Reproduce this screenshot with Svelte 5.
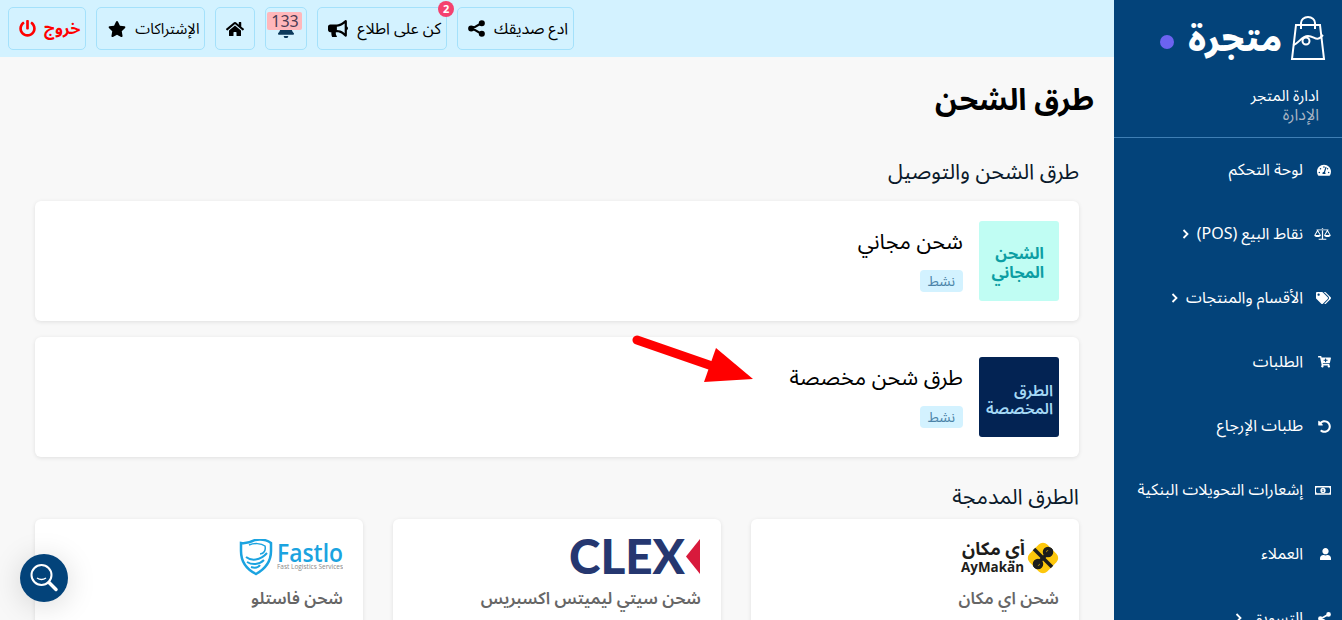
<script>
  const icons = {
    gauge: { box: '0 0 576 512', d: 'M288 32C128.94 32 0 160.94 0 320c0 52.8 14.25 102.26 39.06 144.8 5.61 9.62 16.3 15.2 27.44 15.2h443c11.14 0 21.83-5.58 27.44-15.2C561.75 422.26 576 372.8 576 320c0-159.06-128.94-288-288-288zm0 64c14.71 0 26.58 10.13 30.32 23.65-1.11 2.26-2.64 4.23-3.45 6.67l-9.22 27.67c-5.13 3.49-10.97 6.01-17.64 6.01-17.67 0-32-14.33-32-32S270.33 96 288 96zM96 384c-17.67 0-32-14.33-32-32s14.33-32 32-32 32 14.33 32 32-14.33 32-32 32zm48-160c-17.67 0-32-14.33-32-32s14.33-32 32-32 32 14.33 32 32-14.33 32-32 32zm246.77-72.41l-61.33 184C343.13 347.33 352 364.54 352 384c0 11.72-3.38 22.55-8.88 32H232.88c-5.5-9.45-8.88-20.28-8.88-32 0-33.94 26.5-61.43 59.9-63.59l61.34-184.01c4.17-12.56 17.73-19.45 30.36-15.17 12.57 4.19 19.35 17.79 15.17 30.36zm14.66 57.2l15.52-46.55c3.47-1.29 7.13-2.23 11.05-2.23 17.67 0 32 14.33 32 32s-14.33 32-32 32c-11.38-.01-20.89-6.28-26.57-15.22zM480 384c-17.67 0-32-14.33-32-32s14.33-32 32-32 32 14.33 32 32-14.33 32-32 32z' },
    scale: { box: '0 0 640 512', d: 'M296 50h48v392h120v40H176v-40h120zM96 90h448v36H96zM118 126h34L260 310c0 42-55 66-125 66S10 352 10 310zM135 172L56 306h158zM488 126h34L630 310c0 42-55 66-125 66s-125-24-125-66zM505 172L426 306h158z', rule: 'evenodd' },
    tags: { box: '0 0 640 512', d: 'M497.941 225.941L286.059 14.059A48 48 0 0 0 252.118 0H48C21.49 0 0 21.49 0 48v204.118a48 48 0 0 0 14.059 33.941l211.882 211.882c18.744 18.745 49.136 18.746 67.882 0l204.118-204.118c18.745-18.745 18.745-49.137 0-67.882zM112 160c-26.51 0-48-21.49-48-48s21.49-48 48-48 48 21.49 48 48-21.49 48-48 48zm513.941 133.823L421.823 497.941c-18.745 18.745-49.137 18.745-67.882 0l-.36-.36L527.64 323.522c16.999-16.999 26.36-39.6 26.36-63.64s-9.362-46.641-26.36-63.64L331.397 0h48.721a48 48 0 0 1 33.941 14.059l211.882 211.882c18.745 18.745 18.745 49.137 0 67.882z' },
    cart: { box: '0 0 576 512', d: 'M504.717 320H211.572l6.545 32h268.418c15.401 0 26.816 14.301 23.403 29.319l-5.517 24.276C523.112 414.668 536 433.828 536 456c0 31.202-25.519 56.444-56.824 55.994-29.823-.429-54.35-24.631-55.155-54.447-.44-16.287 6.085-31.049 16.803-41.548H231.176C241.553 426.165 248 440.326 248 456c0 31.813-26.528 57.431-58.67 55.938-28.54-1.325-51.751-24.385-53.251-52.917-1.158-22.034 10.436-41.455 28.051-51.586L93.883 64H24C10.745 64 0 53.255 0 40V24C0 10.745 10.745 0 24 0h102.529c11.401 0 21.228 8.021 23.513 19.19L159.208 64H551.99c15.401 0 26.816 14.301 23.403 29.319l-47.273 208C525.637 312.246 515.923 320 504.717 320zM408 168h-48v-40c0-8.837-7.163-16-16-16h-16c-8.837 0-16 7.163-16 16v40h-48c-8.837 0-16 7.163-16 16v16c0 8.837 7.163 16 16 16h48v40c0 8.837 7.163 16 16 16h16c8.837 0 16-7.163 16-16v-40h48c8.837 0 16-7.163 16-16v-16c0-8.837-7.163-16-16-16z' },
    undo: { box: '0 0 512 512', d: 'M255.545 8c-66.269.119-126.438 26.233-170.86 68.685L48.971 40.971C33.851 25.851 8 36.559 8 57.941V192c0 13.255 10.745 24 24 24h134.059c21.382 0 32.09-25.851 16.971-40.971l-41.75-41.75c30.864-28.899 70.801-44.907 113.23-45.273 92.398-.798 170.283 73.977 169.484 169.442C423.236 348.009 349.816 424 256 424c-41.127 0-79.997-14.678-110.63-41.556-4.743-4.161-11.906-3.908-16.368.553L89.34 422.659c-4.872 4.872-4.631 12.815.482 17.433C133.798 479.813 192.074 504 256 504c136.966 0 247.999-111.033 248-247.998C504.001 119.193 392.354 7.755 255.545 8z' },
    money: { box: '0 0 640 512', d: 'M0 80h640v352H0zM60 140c0 30-10 40-20 40v152c20 0 30 20 30 40h500c0-20 10-40 30-40V180c-20 0-30-20-30-40zM320 150a106 106 0 1 1 0 212 106 106 0 0 1 0-212zM296 200v30h14v60h-18v30h60v-30h-16v-90z', rule: 'evenodd' },
    user: { box: '0 0 448 512', d: 'M224 256c70.7 0 128-57.3 128-128S294.7 0 224 0 96 57.3 96 128s57.3 128 128 128zm89.6 32h-16.7c-22.2 10.2-46.9 16-72.9 16s-50.6-5.8-72.9-16h-16.7C60.2 288 0 348.2 0 422.4V464c0 26.5 21.5 48 48 48h352c26.5 0 48-21.5 48-48v-41.6c0-74.2-60.2-134.4-134.4-134.4z' },
    share: { box: '0 0 512 512', d: 'M416 4a92 92 0 1 1 0 184 92 92 0 0 1 0-184zM416 324a92 92 0 1 1 0 184 92 92 0 0 1 0-184zM96 164a92 92 0 1 1 0 184 92 92 0 0 1 0-184zM384 70l32 56L128 296l-32-56zM416 386l-32 56L96 272l32-56z' },
    bullhorn: { box: '0 0 576 512', d: 'M576 240c0-23.63-12.95-44.04-32-55.12V32.01C544 23.26 537.02 0 512 0c-7.12 0-14.19 2.38-19.98 7.02l-85.03 68.03C364.28 109.19 310.66 128 256 128H64c-35.35 0-64 28.65-64 64v96c0 35.35 28.65 64 64 64h33.7c-1.39 10.48-2.18 21.14-2.18 32 0 39.77 9.26 77.35 25.56 110.94 5.19 10.69 16.52 17.06 28.4 17.06h74.28c26.05 0 41.69-29.84 25.9-50.56-16.4-21.52-26.15-48.36-26.15-77.44 0-11.11 1.62-21.79 4.41-32H256c54.66 0 108.28 18.81 150.98 52.95l85.03 68.03a32.023 32.023 0 0 0 19.98 7.02c24.92 0 32-22.78 32-32V295.13C563.05 284.04 576 263.63 576 240zm-96 141.42l-33.05-26.44C392.95 311.78 325.12 288 256 288v-96c69.12 0 136.95-23.78 190.95-66.98L480 98.58v282.84z' },
    bell: { box: '0 0 448 512', d: 'M224 512c35.32 0 63.97-28.65 63.97-64H160.03c0 35.35 28.65 64 63.97 64zm215.39-149.71c-19.32-20.76-55.47-51.99-55.47-154.29 0-77.7-54.48-139.9-127.94-155.16V32c0-17.67-14.32-32-31.98-32s-31.98 14.33-31.98 32v20.84C118.56 68.1 64.08 130.3 64.08 208c0 102.3-36.15 133.53-55.47 154.29-6 6.45-8.66 14.16-8.61 21.71.11 16.4 12.98 32 32.1 32h383.8c19.12 0 32-15.6 32.1-32 .05-7.55-2.61-15.27-8.61-21.71z' },
    home: { box: '0 0 576 512', d: 'M280.37 148.26L96 300.11V464a16 16 0 0 0 16 16l112.06-.29a16 16 0 0 0 15.92-16V368a16 16 0 0 1 16-16h64a16 16 0 0 1 16 16v95.64a16 16 0 0 0 16 16.05L464 480a16 16 0 0 0 16-16V300L295.67 148.26a12.19 12.19 0 0 0-15.3 0zM571.6 251.47L488 182.56V44.05a12 12 0 0 0-12-12h-56a12 12 0 0 0-12 12v72.61L318.47 43a48 48 0 0 0-61 0L4.34 251.47a12 12 0 0 0-1.6 16.9l25.5 31A12 12 0 0 0 45.15 301l235.22-193.74a12.19 12.19 0 0 1 15.3 0L530.9 301a12 12 0 0 0 16.9-1.6l25.5-31a12 12 0 0 0-1.7-16.93z' },
    star: { box: '0 0 576 512', d: 'M259.3 17.8L194 150.2 47.9 171.5c-26.2 3.8-36.7 36.1-17.7 54.6l105.7 103-25 145.5c-4.5 26.3 23.2 46 46.4 33.7L288 439.6l130.7 68.7c23.2 12.2 50.9-7.4 46.4-33.7l-25-145.5 105.7-103c19-18.5 8.5-50.8-17.7-54.6L382 150.2 316.7 17.8c-11.7-23.6-45.6-23.9-57.4 0z' },
    power: { box: '0 0 512 512', d: 'M400 54.1c63 45 104 118.6 104 201.9 0 136.8-110.8 247.7-247.5 248C120 504.3 8.2 393 8 256.4 7.9 173.1 48.9 99.3 111.8 54.2c11.7-8.3 28-4.8 35 7.7L162.6 90c5.9 10.5 3.1 23.8-6.6 31-41.5 30.8-68 79.6-68 134.9-.1 92.3 74.5 168.1 168 168.1 91.6 0 168.6-74.2 168-169.1-.3-51.8-24.7-101.8-68.1-134-9.7-7.2-12.4-20.5-6.5-30.9l15.8-28.1c7-12.4 23.2-16.1 34.8-7.8zM296 264V24c0-13.3-10.7-24-24-24h-32c-13.3 0-24 10.7-24 24v240c0 13.3 10.7 24 24 24h32c13.3 0 24-10.7 24-24z' }
  };

  const menu = [
    { label: 'لوحة التحكم', icon: 'gauge', w: 14 },
    { label: 'نقاط البيع (POS)', icon: 'scale', w: 17, more: true },
    { label: 'الأقسام والمنتجات', icon: 'tags', w: 15, more: true },
    { label: 'الطلبات', icon: 'cart', w: 13 },
    { label: 'طلبات الإرجاع', icon: 'undo', w: 13 },
    { label: 'إشعارات التحويلات البنكية', icon: 'money', w: 16 },
    { label: 'العملاء', icon: 'user', w: 11 },
    { label: 'التسويق', icon: 'share', w: 13, more: true }
  ];

  const methods = [
    { name: 'شحن مجاني', thumb: ['الشحن', 'المجاني'], kind: 'free' },
    { name: 'طرق شحن مخصصة', thumb: ['الطرق', 'المخصصة'], kind: 'custom' }
  ];

  // icon height follows from the width and the viewBox
  function iconHeight(name, w) {
    const [, , bw, bh] = icons[name].box.split(' ').map(Number);
    return (w * bh) / bw;
  }
</script>

{#snippet icon(name, w)}
  <svg class="ico" width={w} height={iconHeight(name, w)} viewBox={icons[name].box} fill="currentColor">
    <path d={icons[name].d} fill-rule={icons[name].rule || 'nonzero'} />
  </svg>
{/snippet}

<div class="page" dir="rtl" lang="ar">
  <aside class="sidebar">
    <div class="brand">
      <svg width="36" height="45" viewBox="0 0 36 45" fill="none" stroke="#fff" stroke-width="2">
        <path d="M6 9h24l4 34H2z" />
        <path d="M11 13V7a7 6 0 0 1 14 0v6" />
        <path d="M3 29c6-1 8-9 15-9s8 7 15-1" />
        <circle cx="16" cy="25" r="3.500" />
      </svg>
      <span class="brand-name">متجرة</span>
      <span class="brand-dot"></span>
    </div>
    <div class="store">
      <div class="store-name">ادارة المتجر</div>
      <div class="store-role">الإدارة</div>
    </div>
    <nav>
      {#each menu as item}
        <div class="menu-item">
          <span class="menu-icon">{@render icon(item.icon, item.w)}</span>
          <span>{item.label}</span>
          {#if item.more}
            <svg class="chev" width="7" height="10" viewBox="0 0 7 10" fill="none" stroke="#fff" stroke-width="1.8"><path d="M1.500 1l4 4-4 4" /></svg>
          {/if}
        </div>
      {/each}
    </nav>
  </aside>

  <main>
    <header class="topbar">
      <div class="tool"><span>ادع صديقك</span>{@render icon('share', 17)}</div>
      <div class="tool notify">
        <span>كن على اطلاع</span>{@render icon('bullhorn', 20)}
        <b class="dot">2</b>
      </div>
      <div class="tool bell">
        <span class="bell-count">133</span>
        {@render icon('bell', 16)}
      </div>
      <div class="tool home">{@render icon('home', 18)}</div>
      <div class="tool subs"><span>الإشتراكات</span>{@render icon('star', 18)}</div>
      <div class="tool logout"><span>خروج</span>{@render icon('power', 17)}</div>
    </header>

    <h1>طرق الشحن</h1>

    <section class="content">
      <h2>طرق الشحن والتوصيل</h2>
      {#each methods as m}
        <div class="method">
          <div class="thumb {m.kind}"><span>{m.thumb[0]}</span><span>{m.thumb[1]}</span></div>
          <div class="method-body">
            <div class="method-name">{m.name}</div>
            <span class="status">نشط</span>
          </div>
        </div>
      {/each}

      <h2 class="second">الطرق المدمجة</h2>
      <div class="carriers">
        <div class="carrier">
          <svg class="logo" width="100" height="38" viewBox="0 0 100 38">
            <rect x="71.500" y="6.500" width="25" height="25" rx="6" transform="rotate(45 84 19)" fill="#fdc70c" />
            <g fill="none" stroke="#1d1d1b" stroke-width="3.500">
              <path d="M75 10l18 18" />
              <path d="M93 10L75 28" />
              <circle cx="89" cy="13" r="3.500" />
              <circle cx="79" cy="25" r="3.500" />
            </g>
            <text x="66" y="16" class="ay-ar">أي مكان</text>
            <text x="2" y="33" class="ay-en" textLength="63" lengthAdjust="spacingAndGlyphs">AyMakan</text>
          </svg>
          <div class="carrier-name">شحن اي مكان</div>
        </div>
        <div class="carrier">
          <svg class="logo" width="132" height="38" viewBox="0 0 132 38">
            <text x="0" y="35" class="clex" textLength="116" lengthAdjust="spacingAndGlyphs">CLEX</text>
            <path d="M131 0v35L117 17.500z" fill="#d81a3c" />
          </svg>
          <div class="carrier-name">شحن سيتي ليميتس اكسبريس</div>
        </div>
        <div class="carrier">
          <svg class="logo" width="104" height="38" viewBox="0 0 104 38">
            <g fill="none" stroke="#1ba3e0">
              <path d="M2 4C8 5 12 3 16 1c6-1 12 0 16 3v8c0 10-6 18-15 23C7 30 2 22 2 12z" stroke-width="2.500" />
              <path d="M7 18c5 4 14 4 21-4" stroke-width="2" />
              <path d="M8 23c5 3 12 3 17-2" stroke-width="2" />
              <path d="M12 28c3 1 7 1 9-2" stroke-width="2" />
              <path d="M10 6c5-2 12-2 16 1 1 4-1 8-5 8" stroke-width="1.500" />
            </g>
            <text x="38" y="23" class="fast" textLength="66" lengthAdjust="spacingAndGlyphs">Fastlo</text>
            <text x="38" y="30" class="fast-sub" textLength="66" lengthAdjust="spacingAndGlyphs">Fast Logistics Services</text>
          </svg>
          <div class="carrier-name">شحن فاستلو</div>
        </div>
      </div>
    </section>

    <!-- annotation drawn on top of the screenshot -->
    <svg class="arrow" width="130" height="60" viewBox="0 0 130 60">
      <path d="M5 5l75 26" stroke="#ff0000" stroke-width="9" stroke-linecap="round" />
      <path d="M84 13l37 31-49 3z" fill="#ff0000" />
    </svg>

    <div class="search-fab">
      <svg width="32" height="32" viewBox="0 0 32 32" fill="none" stroke="#fff">
        <circle cx="13.500" cy="13" r="10" stroke-width="2" />
        <path d="M21 20.500l7 7" stroke-width="3.500" stroke-linecap="round" />
        <path d="M9 16c3 2 6 2 9 0" stroke-width="1.500" />
      </svg>
    </div>
  </main>
</div>

<style>
  :global(body) {
    margin: 0;
    background: #f8f8f8;
  }

  .page {
    display: flex;
    height: 620px;
    overflow: hidden;
    font-family: "Noto Sans", "Noto Sans Arabic", sans-serif;
    color: #000;
  }

  .sidebar {
    width: 228px;
    flex-shrink: 0;
    background: #03437a;
    color: #fff;
    overflow: hidden;
  }

  .brand {
    display: flex;
    align-items: center;
    height: 76px;
    padding: 0 16px 0 0;
  }

  .brand-name {
    margin: 0 8px 0 14px;
    font-size: 34px;
    font-weight: 900;
    line-height: 1;
  }

  .brand-dot {
    width: 14px;
    height: 14px;
    border-radius: 50%;
    background: #6c63f0;
    margin-top: 8px;
  }

  .store {
    padding: 11px 23px 9px 0;
    height: 41px;
    border-bottom: 1px solid #3f7fb5;
    font-size: 16px;
    line-height: 18px;
  }

  .store-name {
    font-size: 15.4px;
  }

  .store-role {
    color: #a9b5c4;
  }

  .menu-item {
    display: flex;
    align-items: center;
    height: 64px;
    font-size: 16px;
    white-space: nowrap;
  }

  .menu-icon {
    display: flex;
    width: 17px;
    margin: 0 11px;
  }

  .chev {
    margin-right: 8px;
  }

  .ico {
    display: block;
    flex-shrink: 0;
  }

  main {
    position: relative;
    flex: 1;
    min-width: 0;
  }

  .topbar {
    display: flex;
    justify-content: flex-end;
    gap: 10px;
    height: 57px;
    padding: 7px 8px 0;
    box-sizing: border-box;
    background: #d3f2ff;
  }

  .tool {
    position: relative;
    display: flex;
    align-items: center;
    gap: 9px;
    height: 43px;
    padding: 0 5px 0 10px;
    box-sizing: border-box;
    border: 1px solid #a4e1fb;
    border-radius: 5px;
    font-size: 16px;
    white-space: nowrap;
  }

  .home {
    padding: 0 10px;
  }

  .subs {
    padding-left: 11px;
    font-size: 15px;
  }

  .logout {
    color: #ff0000;
    font-weight: 700;
    gap: 8px;
  }

  .dot {
    position: absolute;
    top: -7px;
    right: -8px;
    width: 16px;
    height: 16px;
    border-radius: 50%;
    background: #f4416f;
    color: #fff;
    font-size: 11px;
    line-height: 16px;
    text-align: center;
  }

  .bell {
    width: 42px;
    padding: 0;
    display: block;
  }

  .bell .ico {
    position: absolute;
    left: 12px;
    top: 12px;
    color: #0c3a5c;
  }

  .bell-count {
    position: absolute;
    left: 1px;
    top: 4px;
    z-index: 1;
    width: 35px;
    height: 18px;
    border-radius: 2px;
    background: #ffb7bb;
    color: #4a3b52;
    font-size: 16px;
    line-height: 18px;
    text-align: center;
  }

  h1 {
    margin: 23px 20px 0 0;
    font-size: 30px;
    line-height: 38px;
    font-weight: 700;
  }

  .content {
    padding: 0 35px;
  }

  h2 {
    margin: 39px 0 16px;
    font-size: 21.6px;
    line-height: 28px;
    font-weight: 400;
    color: #0b1a2b;
  }

  h2.second {
    margin: 25px 0 9px;
  }

  .method {
    display: flex;
    gap: 16px;
    height: 120px;
    padding: 20px;
    margin-bottom: 16px;
    box-sizing: border-box;
    background: #fff;
    border-radius: 6px;
    box-shadow: 0 1px 4px rgba(0, 0, 0, 0.1);
  }

  .thumb {
    display: flex;
    flex-direction: column;
    justify-content: center;
    width: 80px;
    height: 80px;
    padding-top: 3px;
    box-sizing: border-box;
    border-radius: 3px;
    font-size: 16px;
    line-height: 19px;
  }

  .thumb.free {
    background: #c0fdf3;
    color: #0c9ea3;
    font-weight: 700;
    padding-right: 15px;
  }

  .thumb.custom {
    background: #032353;
    color: #a5d8f5;
    font-size: 15.6px;
    font-weight: 600;
    line-height: 18px;
    padding-right: 6px;
  }

  .method-body {
    padding-top: 5px;
  }

  .method-name {
    font-size: 21.6px;
    line-height: 30px;
    margin-bottom: 13px;
  }

  .status {
    display: inline-block;
    height: 22px;
    padding: 0 8px;
    border-radius: 4px;
    background: #d3f2ff;
    color: #4b83a8;
    font-size: 14px;
    line-height: 22px;
  }

  .carriers {
    display: grid;
    grid-template-columns: repeat(3, 1fr);
    gap: 30px;
  }

  .carrier {
    height: 130px;
    padding: 20px;
    box-sizing: border-box;
    background: #fff;
    border-radius: 6px;
    box-shadow: 0 1px 4px rgba(0, 0, 0, 0.1);
  }

  .logo {
    display: block;
    margin-bottom: 9px;
    direction: ltr;
  }

  .carrier-name {
    font-size: 16.8px;
    font-weight: 600;
    line-height: 24px;
    color: #666;
  }

  .ay-ar {
    direction: rtl;
    font-size: 18px;
    font-weight: 700;
    fill: #1d1d1b;
  }

  .ay-en {
    font-family: "Open Sans", sans-serif;
    font-size: 14px;
    font-weight: 700;
    fill: #1d1d1b;
  }

  .clex {
    font-family: Lato, sans-serif;
    font-size: 48px;
    font-weight: 900;
    fill: #253770;
  }

  .fast {
    font-family: "Open Sans", sans-serif;
    font-size: 25px;
    font-weight: 600;
    fill: #1ba3e0;
  }

  .fast-sub {
    font-family: "Open Sans", sans-serif;
    font-size: 7px;
    fill: #888;
  }

  .arrow {
    position: absolute;
    left: 632px;
    top: 335px;
  }

  .search-fab {
    position: absolute;
    left: 20px;
    top: 554px;
    display: flex;
    align-items: center;
    justify-content: center;
    width: 48px;
    height: 48px;
    border-radius: 50%;
    background: #03437a;
    box-shadow: 0 4px 30px rgba(0, 0, 0, 0.15);
  }
</style>
